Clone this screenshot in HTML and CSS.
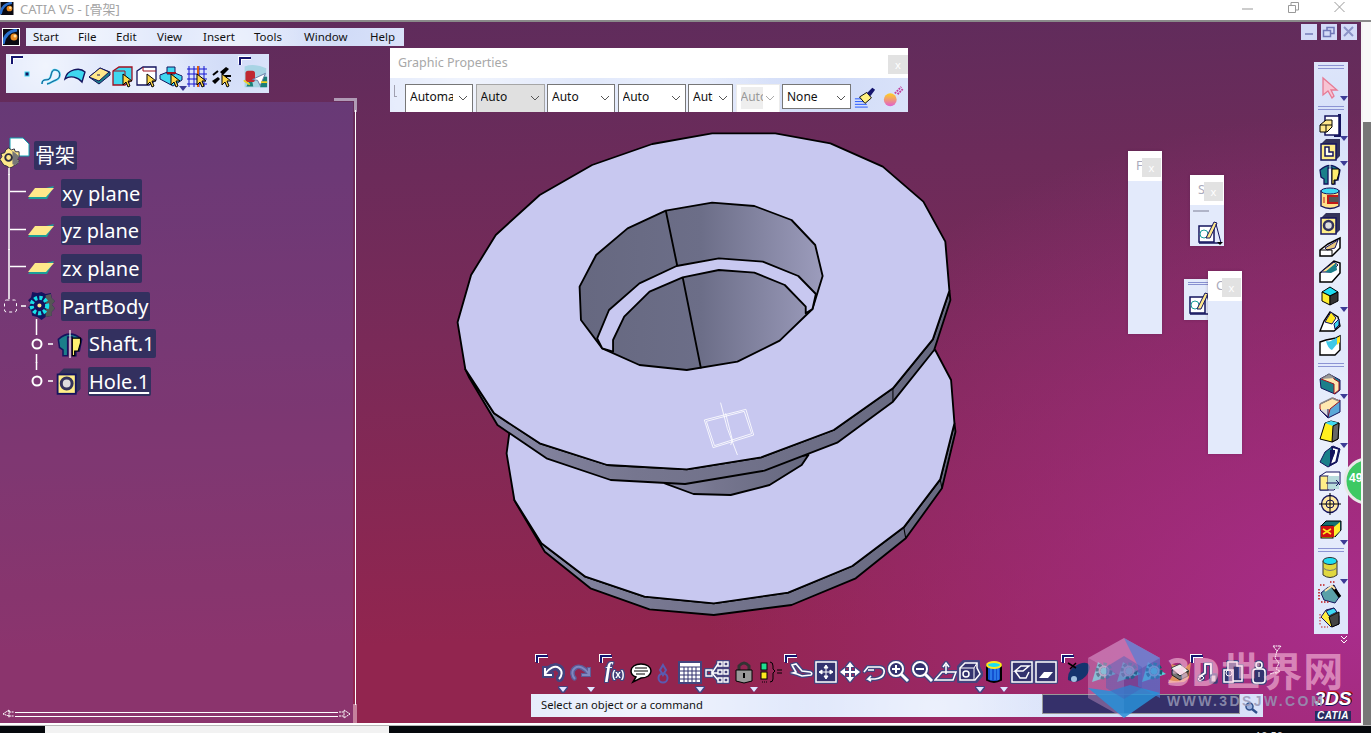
FILE: index.html
```html
<!DOCTYPE html>
<html lang="en">
<head>
<meta charset="utf-8">
<title>CATIA V5 - [骨架]</title>
<link rel="stylesheet" href="styles.css">
</head>
<body>
<svg class="defs" aria-hidden="true">
<defs>
<linearGradient id="wall" x1="0" y1="0" x2="1" y2="0"><stop offset="0" stop-color="#666880"/><stop offset=".5" stop-color="#6c6e88"/><stop offset="1" stop-color="#9c9cbc"/></linearGradient>
<linearGradient id="band" x1="0" y1="0" x2="1" y2="0"><stop offset="0" stop-color="#8a8aa8"/><stop offset=".35" stop-color="#76768f"/><stop offset="1" stop-color="#66687f"/></linearGradient>
<linearGradient id="ball" x1="0" y1="0" x2="0" y2="1"><stop offset="0" stop-color="#ffd020"/><stop offset="1" stop-color="#e060d0"/></linearGradient>
<symbol id="logo" viewBox="0 0 16 16"><rect width="16" height="16" fill="#0a0a12"/><path d="M0 15C1 7 6 2 14 1" stroke="#2a70d0" stroke-width="3" fill="none"/><circle cx="11" cy="8" r="3.5" fill="#e88a20"/><circle cx="12" cy="7" r="1.5" fill="#ffe0a0"/></symbol>
<symbol id="cur" viewBox="0 0 24 24"><path d="M12 10v11l3-3 2 5 2-1-2-5h4z" fill="#ffd84a" stroke="#000"/></symbol>
<symbol id="point" viewBox="0 0 24 24"><rect x="10" y="8" width="4" height="4" fill="#14145e" stroke="#3fd8f0"/></symbol>
<symbol id="spline" viewBox="0 0 24 24"><path d="M3 20c0-7 6-2 8-6s1-9 6-8 5 8 0 10-5 3-9 4" fill="none" stroke="#3fd8f0" stroke-width="2"/><path d="M3 20c0-7 6-2 8-6s1-9 6-8 5 8 0 10-5 3-9 4" fill="none" stroke="#14145e" stroke-width=".7"/></symbol>
<symbol id="surf" viewBox="0 0 24 24"><path d="M2 15C4 5 17 3 22 8l-3 10c-4-5-12-7-17-3z" fill="#3fd8f0" stroke="#14145e" stroke-width="1.4"/></symbol>
<symbol id="dia" viewBox="0 0 24 24"><path d="M2 13 13 4l10 4v3L12 20z" fill="#1b7f8a" stroke="#14145e"/><path d="M2 13 13 4l9 4-10 9z" fill="#ffe88a" stroke="#14145e"/><path d="M10 11h3" stroke="#14145e"/></symbol>
<symbol id="box1" viewBox="0 0 24 24"><path d="M2 7 8 3h13v13l-7 5H2z" fill="#3fd8f0" stroke="#a01020" stroke-width="1.3"/><path d="M2 7h12v14" fill="none" stroke="#a01020"/><use href="#cur"/></symbol>
<symbol id="box2" viewBox="0 0 24 24"><path d="M2 7 8 3h13v13l-7 5H2z" fill="#fff" stroke="#14145e" stroke-width="1.3"/><path d="M8 3v4h13" fill="none" stroke="#a01020"/><use href="#cur"/></symbol>
<symbol id="mbox" viewBox="0 0 24 24"><path d="M1 11 11 7l12 5-9 5z" fill="#3fd8f0" stroke="#14145e"/><path d="M8 3h8v7H8zM1 11v4l13 7 9-6v-4" fill="#3fd8f0" stroke="#14145e"/><path d="M8 9h9" stroke="#a01020" stroke-width="2"/><use href="#cur"/></symbol>
<symbol id="grid" viewBox="0 0 24 24"><path d="M2 5h20M2 10h20M2 15h20M2 20h20M4 2v21M9 2v21M14 2v21M19 2v21" stroke="#1414d0"/><path d="M13 2v21" stroke="#e06010" stroke-width="2"/><use href="#cur"/></symbol>
<symbol id="cross" viewBox="0 0 24 24"><path d="M2 17 8 13l2 2-5 5zM10 8l6-5 3 2-6 6z" fill="#000"/><path d="M13 12h8M3 11 8 7" stroke="#000" stroke-width="2"/><use href="#cur"/></symbol>
<symbol id="photo" viewBox="0 0 30 30"><path d="M3 4Q14 0 28 6v22H3z" fill="#a8d4e4"/><rect x="4" y="9" width="11" height="13" rx="3" fill="#c02830"/><path d="M8 22h4l1 5H5zM22 16h7v12h-8z" fill="#1b7f78"/><path d="M12 19 27 12l-6 14-3-6z" fill="#fff" stroke="#6070a0"/><path d="M2 20l7 5M22 22h7" stroke="#f0d020" stroke-width="2"/></symbol>
<symbol id="brush" viewBox="0 0 24 24"><path d="M1 14h11M1 17h12M1 20h13M1 23h14" stroke="#1a50ff"/><path d="M6 12 14 7l5 6-7 6z" fill="#fff080" stroke="#000"/><path d="M14 8l6-6 3 2-5 7z" fill="#14146e"/></symbol>
<symbol id="fball" viewBox="0 0 24 24"><circle cx="9" cy="15" r="7" fill="url(#ball)"/><path d="M14 8l7-7M17 9l6-6" stroke="#c040a0" stroke-width="2" stroke-dasharray="2 1"/></symbol>
<symbol id="arrow" viewBox="0 0 24 24"><path d="M6 3v17l5-4 4 7 2-2-3-6h6z" fill="#f7c4d4" stroke="#e77a94" stroke-width="1.3"/></symbol>
<symbol id="pocket" viewBox="0 0 24 24"><path d="M7 3h14v19H7z" fill="#fff" stroke="#14145e" stroke-width="1.5"/><path d="M20 2h2v21h-6" stroke="#14145e" stroke-width="2" fill="none"/><path d="M2 12l6-5h6v7l-5 5H2z" fill="#ffe88a" stroke="#000"/><path d="M8 12h6M8 12v7M2 12h6" stroke="#000" fill="none"/></symbol>
<symbol id="pad" viewBox="0 0 24 24"><path d="M3 7l5-5h14v17l-4 4H3z" fill="#33335a"/><rect x="3" y="7" width="15" height="16" fill="#ffee88" stroke="#14145e" stroke-width="1.5"/><path d="M7 10h4v5h4v4H7z" fill="#ffe" stroke="#14145e" stroke-width="1.5"/></symbol>
<symbol id="shaft" viewBox="0 0 24 24"><path d="M2 8Q12-1 22 8l-2 10h-3v4h-3V6h-4v16H6v-5L3 15z" fill="#1b7f8a" stroke="#14145e" stroke-width="1.3"/><path d="M14 7h7v4l-2 7h-3v4h-2z" fill="#ffee70" stroke="#000"/><path d="M12 0v24" stroke="#fff"/></symbol>
<symbol id="groove" viewBox="0 0 24 24"><path d="M3 5h18v15q-9 5-18 0z" fill="#ffe088" stroke="#14145e" stroke-width="1.4"/><ellipse cx="12" cy="5" rx="9" ry="3" fill="#3fd8f0" stroke="#14145e"/><path d="M20 10H10v7h10" fill="#555" stroke="#c01818" stroke-width="2"/><path d="M6 11v6" stroke="#c01818"/></symbol>
<symbol id="hole" viewBox="0 0 24 24"><path d="M3 7l5-5h14v17l-4 4H3z" fill="#33335a"/><rect x="3" y="7" width="15" height="16" fill="#ffee88" stroke="#14145e" stroke-width="1.5"/><circle cx="10.500" cy="14.500" r="4.500" fill="#ddd" stroke="#33335a" stroke-width="2.500"/></symbol>
<symbol id="rib" viewBox="0 0 24 24"><path d="M2 21v-6l8-6 12-6v10l-8 8z" fill="#fff" stroke="#000" stroke-width="1.5"/><path d="M7 13l13-8-3 8-8 2z" fill="#e8c880" stroke="#14145e"/><path d="M2 15h12v6" fill="none" stroke="#000"/></symbol>
<symbol id="slot" viewBox="0 0 24 24"><path d="M2 23v-9l14-12 6 2v10l-8 9z" fill="#fff" stroke="#000" stroke-width="1.5"/><path d="M3 13l13-10 4 3-7 7z" fill="#ffe088" stroke="#14145e"/><path d="M7 13l11-9 1 7-6 3z" fill="#1b7f8a"/></symbol>
<symbol id="cube" viewBox="0 0 24 24"><path d="M4 8l8-5 8 5-8 4z" fill="#1fdcf0" stroke="#000"/><path d="M4 8l8 4v9l-8-4z" fill="#ffef30" stroke="#000"/><path d="M12 12l8-4v9l-8 4z" fill="#333" stroke="#000"/></symbol>
<symbol id="stiff" viewBox="0 0 24 24"><path d="M2 23l4-10 6-9 8 5 2 9-6 5z" fill="#fff" stroke="#000" stroke-width="1.4"/><path d="M7 14 13 4l5 6-4 6z" fill="#ffe820" stroke="#14145e"/><path d="M16 16l5-5v6l-4 4z" fill="#3fd8f0" stroke="#14145e"/></symbol>
<symbol id="loft" viewBox="0 0 24 24"><path d="M2 9l6-2 10-2 4-2v14l-5 5H2z" fill="#fff" stroke="#000" stroke-width="1.4"/><path d="M8 8c4 1 5 0 10-3l3-1-2 7-5 6c-3-1-5-5-6-9z" fill="#3fc8e8"/><path d="M19 5l3-2v6l-3 3z" fill="#ffe820"/></symbol>
<symbol id="fillet" viewBox="0 0 24 24"><path d="M2 8l9-5 11 6v10l-5 4L3 17z" fill="#1b7f8a" stroke="#14145e"/><path d="M3 8c8-5 12-4 13 0l5 3v8l-5 4V13z" fill="#ffe8b0" stroke="#a01020"/><path d="M3 8l8-5 6 4" fill="#999" stroke="#777"/></symbol>
<symbol id="chamfer" viewBox="0 0 24 24"><path d="M2 15l8 8 12-6V5z" fill="#5aa8d8" stroke="#14145e"/><path d="M2 14V9L15 3l7 3-10 8-2 8z" fill="#ffe8b0" stroke="#a01020"/><path d="M2 9l12-6 7 3" stroke="#888" fill="none" stroke-width="1.500"/><path d="M2 15l8 7v-8" stroke="#14145e" fill="#ddd"/></symbol>
<symbol id="draft" viewBox="0 0 24 24"><path d="M7 4l6-2 8 2-1 16-6 3-12-3z" fill="#ffef20" stroke="#000"/><path d="M7 4l6-2 8 2-6 3z" fill="#3fd8f0"/><path d="M15 7l6-3-1 16-6 3z" fill="#666" stroke="#000"/></symbol>
<symbol id="shell" viewBox="0 0 24 24"><path d="M2 18l5-10 8-6 7 3-3 13-9 5z" fill="#1b7f8a" stroke="#14145e"/><path d="M14 3l7 2-3 13-6 3 3-10z" fill="#fff" stroke="#14145e" stroke-width="1.500"/><path d="M12 6h5v3l-3 7-2 3z" fill="#14145e"/></symbol>
<symbol id="thick" viewBox="0 0 24 24"><path d="M2 8l6-4h14v12l-6 6H2z" fill="#fff" stroke="#14145e"/><rect x="2" y="8" width="8" height="14" fill="#ffee88" stroke="#14145e"/><path d="M10 8h11v13H10z" fill="#b8dcdc"/><path d="M8 15h13m-3-3 3 3-3 3" stroke="#14145e" fill="none"/></symbol>
<symbol id="target" viewBox="0 0 24 24"><circle cx="12" cy="12" r="8.500" fill="#ffe8a0" stroke="#14145e" stroke-width="1.300"/><circle cx="12" cy="12" r="4" fill="none" stroke="#14145e"/><path d="M12 1v22M1 12h22" stroke="#000"/></symbol>
<symbol id="rbox" viewBox="0 0 24 24"><path d="M3 9l5-5h15v9l-6 7z" fill="#167070" stroke="#000"/><rect x="3" y="9" width="12" height="12" fill="#ffe820" stroke="#000"/><path d="M3 9h13v11H3z" fill="#d01010"/><path d="M5 12l8 5M13 12l-8 5" stroke="#ffe820" stroke-width="1.500"/><path d="M16 10l6-5v9l-6 6z" fill="#ffef30"/></symbol>
<symbol id="cyl" viewBox="0 0 24 24"><path d="M5 6h14v14q-7 5-14 0z" fill="#e0d840" stroke="#333"/><path d="M5 13q7 5 14 0" fill="none" stroke="#777"/><ellipse cx="12" cy="6" rx="7" ry="3.500" fill="#1fdcf0" stroke="#333"/></symbol>
<symbol id="spark" viewBox="0 0 24 24"><path d="M3 13l6-5 7-3 6 11-5 7-11-3z" fill="#5aa0a8" stroke="#14145e"/><path d="M14 6l8 11" stroke="#000" stroke-width="3"/><path d="M2 5h6M1 9v12M3 22h8M12 2h6" stroke="#c01818" stroke-width="1.600" stroke-dasharray="1.500 1.500"/><path d="M7 11l7-5 3 3" stroke="#ffe8b0" stroke-width="2" fill="none"/></symbol>
<symbol id="spark2" viewBox="0 0 24 24"><path d="M3 12l5-7 8-2 5 8v8l-8 3z" fill="#ffee40" stroke="#14145e"/><path d="M8 6l8-3 3 4-8 4z" fill="#3fd8f0" stroke="#14145e"/><path d="M11 12l10-5v12l-7 3z" fill="#444" stroke="#000"/><path d="M2 9v11M3 22h7" stroke="#c01818" stroke-dasharray="1.500 1.500"/></symbol>
<symbol id="sketch" viewBox="0 0 26 26"><path d="M2 6h15v16H2z" fill="#fff" stroke="#14145e" stroke-width="1.500"/><path d="M2 23h20" stroke="#14145e" stroke-width="1.500"/><circle cx="7" cy="14" r="4" fill="none" stroke="#1b9f9a"/><path d="M9 18 17 2l3 1-7 15z" fill="#ffe88a" stroke="#14145e"/><path d="M19 4l5 19" stroke="#14145e"/><path d="M20 22h6l-3 3z" fill="#000"/></symbol>
<symbol id="undo" viewBox="0 0 24 24"><path d="M4 8v7h7M4 14C8 8 14 5 18 8s3 8 0 11" fill="none" stroke="#fff" stroke-width="2"/></symbol>
<symbol id="redo" viewBox="0 0 24 24"><path d="M20 8v7h-7M20 14C16 8 10 5 6 8s-3 8 0 11" fill="none" stroke="#8088c0" stroke-width="2"/></symbol>
<symbol id="fx" viewBox="0 0 24 24"><text x="0" y="17" class="fxt">f</text><text x="7" y="18" class="fxs">(x)</text></symbol>
<symbol id="talk" viewBox="0 0 24 24"><path d="M12 4c6 0 10 3 10 7s-4 7-10 7l-8 4 3-5c-3-1-5-3-5-6 0-4 4-7 10-7z" fill="#fff" stroke="#000" stroke-width="1.500"/><path d="M6 8h12M5 11h14M7 14h9" stroke="#000"/></symbol>
<symbol id="dim" viewBox="0 0 24 24"><circle cx="12" cy="18" r="4.500" fill="none" stroke="#5a5ab0" stroke-width="2"/><path d="M12 5l3 5-3 5-3-5z" fill="none" stroke="#5a5ab0" stroke-width="2"/></symbol>
<symbol id="table" viewBox="0 0 24 24"><rect x="2" y="3" width="20" height="19" fill="#fff"/><path d="M2 7h20M2 11h20M2 15h20M2 19h20M6 7v15M10 7v15M14 7v15M18 7v15" stroke="#33336e"/></symbol>
<symbol id="tree" viewBox="0 0 24 24"><path d="M1 10h6v6H1zM13 2h4v4h-4zM19 2h4v4h-4zM13 10h4v4h-4zM19 10h4v4h-4zM13 18h4v4h-4zM19 18h4v4h-4z" fill="none" stroke="#fff" stroke-width="1.400"/><path d="M7 13l6-9M7 13h6M7 13l6 7" stroke="#fff" stroke-width="1.400"/></symbol>
<symbol id="lock" viewBox="0 0 24 24"><path d="M7 10V6q5-6 10 0v4" fill="none" stroke="#333" stroke-width="3"/><path d="M4 10h16v11l-8 2-8-2z" fill="#999" stroke="#000"/><path d="M12 13v5" stroke="#000" stroke-width="2"/></symbol>
<symbol id="eq" viewBox="0 0 24 24"><rect x="2" y="3" width="6" height="7" fill="#1fdc90" stroke="#000"/><rect x="2" y="12" width="6" height="7" fill="#ffe820" stroke="#000"/><path d="M3 22h1m1 0h1m1 0h1" stroke="#000"/><path d="M11 2q3 0 3 4v3l2 2-2 2v6q0 3-3 3" fill="none" stroke="#000"/><path d="M18 10h5M18 13h5" stroke="#000"/></symbol>
<symbol id="plane" viewBox="0 0 24 24"><path d="M2 5l4-1 6 7 8 1q3 1 1 3l-9 1-5-2-4-1 3-1-3-5z" fill="none" stroke="#fff" stroke-width="1.600"/></symbol>
<symbol id="fit" viewBox="0 0 24 24"><rect x="2" y="2" width="20" height="20" fill="#33336e" stroke="#fff" stroke-width="1.500"/><path d="M12 6v12M6 12h12M12 5l-2 3h4zM12 19l-2-3h4zM5 12l3-2v4zM19 12l-3-2v4z" fill="#fff" stroke="#fff"/></symbol>
<symbol id="pan" viewBox="0 0 24 24"><path d="M12 2l-4 5h3v4H7V8l-5 4 5 4v-3h4v4H8l4 5 4-5h-3v-4h4v3l5-4-5-4v3h-4V7h3z" fill="#fff"/></symbol>
<symbol id="rot" viewBox="0 0 24 24"><path d="M2 12l4-5h12q5 1 4 6t-9 6H6l3-3m-3 3 3 2M6 10h6" fill="none" stroke="#fff" stroke-width="1.600"/></symbol>
<symbol id="zin" viewBox="0 0 24 24"><circle cx="10" cy="9" r="7" fill="#33336e" stroke="#fff" stroke-width="2"/><path d="M6 9h8M10 5v8" stroke="#fff" stroke-width="2"/><path d="M15 14l7 7" stroke="#fff" stroke-width="3"/></symbol>
<symbol id="zout" viewBox="0 0 24 24"><circle cx="10" cy="9" r="7" fill="#33336e" stroke="#fff" stroke-width="2"/><path d="M6 9h8" stroke="#fff" stroke-width="2"/><path d="M15 14l7 7" stroke="#fff" stroke-width="3"/></symbol>
<symbol id="norm" viewBox="0 0 24 24"><path d="M1 20 8 12h14l-3 8zM12 14V5M9 7l3-4 3 4" fill="none" stroke="#fff" stroke-width="1.500"/></symbol>
<symbol id="view" viewBox="0 0 24 24"><path d="M2 8l5-5h12v5l3 6-5 6H2z" fill="#33336e" stroke="#fff" stroke-width="1.500"/><path d="M2 8h14v12M16 8l3-5" fill="none" stroke="#fff"/><circle cx="8" cy="14" r="3" fill="none" stroke="#fff" stroke-width="1.500"/></symbol>
<symbol id="can" viewBox="0 0 24 24"><path d="M5 5h14v15q-7 4-14 0z" fill="#1450d0" stroke="#000" stroke-width="2"/><path d="M9 8v12M13 8v12M16 8v12" stroke="#40a0ff"/><ellipse cx="12" cy="5" rx="7" ry="3" fill="#1fdcf0" stroke="#ffe820" stroke-width="2"/></symbol>
<symbol id="sq1" viewBox="0 0 24 24"><rect x="2" y="2" width="20" height="20" fill="#33336e" stroke="#fff" stroke-width="1.500"/><path d="M5 11l6-5h8l-6 5zM5 11l5 7h6l3-6" fill="none" stroke="#fff" stroke-width="1.500"/></symbol>
<symbol id="sq2" viewBox="0 0 24 24"><rect x="2" y="2" width="20" height="20" fill="#33336e" stroke="#fff" stroke-width="1.500"/><path d="M5 18l5-6h9l-5 6z" fill="#fff"/></symbol>
<symbol id="blue" viewBox="0 0 24 24"><path d="M1 20Q0 9 12 4q8-3 10 1t-3 11Q10 25 1 20z" fill="#14346e"/><circle cx="7" cy="19" r="3" fill="#a0c0e0"/><path d="M1 3l8 5M9 3l-6 6" stroke="#000" stroke-width="1.500"/></symbol>
<symbol id="gear" viewBox="0 0 24 24"><path d="M0 22 24 14 6 2z" fill="#58d0d8"/><circle cx="12" cy="11" r="6" fill="none" stroke="#10606e" stroke-width="5" stroke-dasharray="3 1.500"/><circle cx="12" cy="11" r="4.500" fill="none" stroke="#a8a8c0" stroke-width="2"/></symbol>
<symbol id="photo2" viewBox="0 0 24 24"><path d="M1 23l6-10L4 4l14 4 6-6-2 16-5 4z" fill="#e09060"/><path d="M4 8l9-4 9 7-9 5z" fill="#eee" stroke="#444"/><path d="M5 10l8 6 8-5v5l-8 4-8-5z" fill="#777" stroke="#222"/></symbol>
<symbol id="music" viewBox="0 0 24 24"><path d="M3 17l6-4V4h6v14" fill="none" stroke="#fff" stroke-width="1.800" stroke-linejoin="round"/><path d="M2 19l4-3 2 2-4 3z" fill="#33336e" stroke="#fff"/><rect x="15" y="15" width="5" height="7" fill="#ddd" stroke="#33336e"/></symbol>
<symbol id="page" viewBox="0 0 24 24"><path d="M6 2h9v4h5v15H6z" fill="#33336e" stroke="#fff" stroke-width="1.500"/><path d="M2 10h9v12H2z" fill="#33336e" stroke="#fff" stroke-width="1.500"/><circle cx="7" cy="13" r="3" fill="none" stroke="#fff"/></symbol>
<symbol id="jar" viewBox="0 0 24 24"><rect x="6" y="9" width="12" height="14" rx="3" fill="#33336e" stroke="#fff" stroke-width="1.500"/><circle cx="12" cy="5" r="3" fill="#33336e" stroke="#fff" stroke-width="1.500"/><path d="M12 12v5" stroke="#fff"/></symbol>
<symbol id="tplane" viewBox="0 0 28 16"><path d="M1 14 7 6 27 1l-7 13z" fill="#1b9f9a"/><path d="M1 12 8 3h19l-8 9z" fill="#ffe88a"/></symbol>
<symbol id="tbody" viewBox="0 0 28 28"><path d="M14 1l4 2 5-1 1 5 3 3-3 3 3 4-3 3v4l-6 1-4 3-4-3-5-1-1-5-3-3 3-4-3-3 3-3 1-5 5 1z" fill="#14145e"/><path d="M18 4l5-1 1 4 3 3-3 3 3 4-3 3v4l-6 1z" fill="#555"/><circle cx="12" cy="14" r="7.500" fill="none" stroke="#18e0e8" stroke-width="4" stroke-dasharray="3 2"/><circle cx="12" cy="14" r="3" fill="#ffe88a" stroke="#14145e" stroke-width="2"/></symbol>
<symbol id="troot" viewBox="0 0 22 22"><path d="M9 1l3 2 3-1 1 3h4v5l-3 2 3 2-2 4-3 1-2 2-3 1-3-2-3-1-2-3-2-3 2-3-1-3 4-1 1-3z" fill="#ffe88a" stroke="#2a2a40"/><path d="M13 4l4 3 3 3-2 3 2 3-4 3-3-1z" fill="#777"/><circle cx="9" cy="11" r="3.500" fill="none" stroke="#2a2a40" stroke-width="2"/></symbol>
</defs>
</svg>

<header class="titlebar">
  <svg class="tb-logo"><use href="#logo"/></svg>
  <span class="tb-title">CATIA V5 - [骨架]</span>
  <div class="tb-ctrls">
    <svg class="tb-c"><path d="M0 7h11" stroke="#999"/></svg>
    <svg class="tb-c"><path d="M.5 3.500h7v7h-7zM3 3V.5h7.500V8H8" fill="none" stroke="#999"/></svg>
    <svg class="tb-c"><path d="M.5 0l10 10M10.500 0l-10 10" stroke="#999"/></svg>
  </div>
</header>

<div class="work">
<main class="canvas">

  <svg class="logo-btn"><use href="#logo"/></svg>
  <nav class="menu mottle">
    <span class="m1">Start</span><span class="m2">File</span><span class="m3">Edit</span><span class="m4">View</span><span class="m5">Insert</span><span class="m6">Tools</span><span class="m7">Window</span><span class="m8">Help</span>
  </nav>

  <div class="toolbar1 mottle">
    <i class="bracket"></i>
    <svg class="i"><use href="#point"/></svg>
    <svg class="i"><use href="#spline"/></svg>
    <svg class="i"><use href="#surf"/></svg>
    <svg class="i"><use href="#dia"/></svg>
    <svg class="i"><use href="#box1"/></svg>
    <svg class="i"><use href="#box2"/></svg>
    <span class="t dr-bot"><svg class="i"><use href="#mbox"/></svg></span>
    <svg class="i tm2"><use href="#grid"/></svg>
    <svg class="i tm1"><use href="#cross"/></svg>
    <span class="photo-wrap"><i class="bracket br-in"></i><svg class="photo"><use href="#photo"/></svg></span>
  </div>

  <aside class="panel">
    <i class="corner"></i>
    <i class="tab"></i>
    <ul class="tree">
      <li class="row"><svg class="c c0" viewBox="0 0 34 38"><path d="M9 30v8" stroke="#fff" stroke-width="1.500"/><path d="M10 1h13l6 6v12H10z" fill="#fff" stroke="#10a0b0"/><use href="#troot" x="0" y="10" width="21" height="21"/></svg><span class="lb">骨架</span></li>
      <li class="row"><svg class="c c1" viewBox="0 0 61 38"><path d="M9 0v38M10 17.500h16" stroke="#fff" stroke-width="1.500"/><use href="#tplane" x="27" y="11" width="28" height="16"/></svg><span class="lb">xy plane</span></li>
      <li class="row"><svg class="c c1" viewBox="0 0 61 38"><path d="M9 0v38M10 17.500h16" stroke="#fff" stroke-width="1.500"/><use href="#tplane" x="27" y="11" width="28" height="16"/></svg><span class="lb">yz plane</span></li>
      <li class="row"><svg class="c c1" viewBox="0 0 61 38"><path d="M9 0v38M10 17.500h16" stroke="#fff" stroke-width="1.500"/><use href="#tplane" x="27" y="11" width="28" height="16"/></svg><span class="lb">zx plane</span></li>
      <li class="row"><svg class="c c1" viewBox="0 0 61 38"><path d="M9 0v12M21 19h5M36.500 32v6" stroke="#fff" stroke-width="1.500"/><rect x="4.500" y="13" width="12" height="12" rx="2" fill="none" stroke="#fff" stroke-dasharray="3 3"/><use href="#tbody" x="27" y="4" width="29" height="29"/></svg><span class="lb">PartBody</span></li>
      <li class="row"><svg class="c c2" viewBox="0 0 88 38"><path d="M36.500 0v10M36.500 29v9M48 19h5" stroke="#fff" stroke-width="1.500"/><circle cx="37" cy="19" r="4.500" fill="none" stroke="#fff" stroke-width="2"/><use href="#shaft" x="56" y="5" width="28" height="28"/></svg><span class="lb">Shaft.1</span></li>
      <li class="row"><svg class="c c2" viewBox="0 0 88 38"><path d="M36.500 0v8M48 19h5" stroke="#fff" stroke-width="1.500"/><circle cx="37" cy="19" r="4.500" fill="none" stroke="#fff" stroke-width="2"/><use href="#hole" x="54" y="4" width="29" height="29"/></svg><span class="lb lb-u">Hole.1</span></li>
    </ul>
    <div class="hscroll">
      <svg class="arr"><path d="M1 5 7 1v2M7 7 1 5M7 1v8M7 3h5M7 7h5" fill="none" stroke="#fff" stroke-dasharray="2 .6"/></svg>
      <i class="track"></i>
      <svg class="arr"><path d="M12 5 6 1v8zM1 3h5M1 7h5" fill="none" stroke="#fff" stroke-dasharray="2 .6"/></svg>
    </div>
  </aside>

  <svg class="model" viewBox="0 0 1568 1500" preserveAspectRatio="none">
    <g stroke="#000" stroke-width="5.500" stroke-linejoin="round">
      <path d="M225 1150 310 1295 445 1405 620 1468 810 1485 1040 1455 1230 1375 1378 1255 1485 1105 1525 935 1522 910 1480 1078 1372 1222 1220 1338 1030 1418 810 1450 605 1430 430 1370 300 1270 220 1140z" fill="url(#band)"/>
      <path d="M205 940 197 1000 220 1140 300 1270 430 1370 605 1430 810 1450 1030 1418 1220 1338 1372 1222 1480 1078 1522 910 1512 780 1465 690 1200 800 600 900z" fill="#c8c8f0"/>
      <path d="M1372 1222 1378 1255M1480 1078 1485 1105" fill="none" stroke-width="3"/>
      <path d="M665 1090 750 1122 860 1125 975 1095 1070 1035 1090 1005 800 1040z" fill="url(#band)"/>
      <path d="M75 748 85 770 170 915 315 1015 505 1080 725 1092 960 1052 1175 968 1340 845 1462 690 1510 540 1507 512 1458 658 1340 805 1165 930 950 1012 730 1048 495 1035 295 970 160 880z" fill="url(#band)"/>
      <path d="M52 607 92 465 165 345 295 225 450 135 628 72 805 40 992 40 1155 70 1310 140 1430 245 1495 365 1507 512 1458 658 1340 805 1165 930 950 1012 730 1048 495 1035 295 970 160 880 75 748z" fill="#c8c8f0"/>
      <path d="M1340 805 1340 845" fill="none" stroke-width="3"/>
      <path d="M413 500 462 405 555 325 668 272 805 248 930 258 1040 300 1110 375 1132 468 1102 567 1005 662 880 725 730 750 590 735 480 685 417 600z" fill="url(#wall)"/>
      <path d="M465 655 500 570 590 490 700 438 825 415 955 425 1060 468 1112 522 1102 567 1082 580 1082 560 1020 495 930 458 825 450 718 472 620 515 545 590 512 660 512 695 480 685z" fill="#c8c8f0"/>
      <path d="M668 272 702 438M718 472 772 745" fill="none"/>
    </g>
    <path d="M782 900 905 868 928 945 808 983zM788 904 900 874 922 941 812 977zM830 848 850 925 880 1005M845 880 865 960 860 975" fill="none" stroke="#fff" stroke-width="2.500"/>
  </svg>

  <section class="gp">
    <div class="gp-head"><span class="gp-title">Graphic Properties</span><span class="xbtn gp-x">x</span></div>
    <div class="gp-tools mottle">
      <i class="grip"></i>
      <div class="sel w68 clip"><span>Automatic</span><svg class="chev"><path d="M1 1l4 4 4-4" fill="none" stroke="#555"/></svg></div>
      <div class="sel w69 sel-g"><span>Auto</span><svg class="chev"><path d="M1 1l4 4 4-4" fill="none" stroke="#555"/></svg></div>
      <div class="sel w68"><span>Auto</span><svg class="chev"><path d="M1 1l4 4 4-4" fill="none" stroke="#555"/></svg></div>
      <div class="sel w68"><span>Auto</span><svg class="chev"><path d="M1 1l4 4 4-4" fill="none" stroke="#555"/></svg></div>
      <div class="sel w45 clip"><span>Auto</span><svg class="chev"><path d="M1 1l4 4 4-4" fill="none" stroke="#555"/></svg></div>
      <div class="sel w44 clip sel-d"><span>Auto</span><svg class="chev"><path d="M1 1l4 4 4-4" fill="none" stroke="#aaa"/></svg></div>
      <div class="sel w69 sel-n"><span>None</span><svg class="chev"><path d="M1 1l4 4 4-4" fill="none" stroke="#555"/></svg></div>
      <svg class="i gp-i"><use href="#brush"/></svg>
      <svg class="i gp-i"><use href="#fball"/></svg>
    </div>
  </section>

  <section class="ft ft-f"><div class="ft-head"><span class="ft-l">F</span><span class="xbtn">x</span></div></section>
  <section class="ft ft-s"><div class="ft-head"><span class="ft-l">S</span><span class="xbtn">x</span></div><i class="ft-line"></i><svg class="sk"><use href="#sketch"/></svg></section>
  <section class="ft ft-b mottle"><i class="ft-line2"></i><svg class="sk"><use href="#sketch"/></svg></section>
  <section class="ft ft-c"><div class="ft-head"><span class="ft-l">C</span><span class="xbtn">x</span></div></section>

  <div class="winbtns">
    <span class="wb"><svg class="wbi"><path d="M3 9h8" stroke="#8c94c8" stroke-width="2"/></svg></span>
    <span class="wb"><svg class="wbi"><path d="M1.500 5.500h7v6h-7zM5 5V2.500h7v6H9" fill="none" stroke="#7078b8" stroke-width="1.500"/></svg></span>
    <span class="wb"><svg class="wbi"><path d="M2 2l9 9M11 2l-9 9" stroke="#8c94c8" stroke-width="2"/></svg></span>
  </div>

  <div class="rbar mottle">
    <i class="sep"></i>
    <span class="t r-cur dr"><svg class="i"><use href="#arrow"/></svg></span>
    <i class="sep"></i>
    <div class="r-group">
      <svg class="i"><use href="#pocket"/></svg>
      <span class="t dr"><svg class="i"><use href="#pad"/></svg></span>
      <span class="t dr dr-up"><svg class="i"><use href="#shaft"/></svg></span>
      <svg class="i"><use href="#groove"/></svg>
      <svg class="i"><use href="#hole"/></svg>
      <svg class="i"><use href="#rib"/></svg>
      <svg class="i"><use href="#slot"/></svg>
      <svg class="i"><use href="#cube"/></svg>
      <span class="t dr dr-up"><svg class="i"><use href="#stiff"/></svg></span>
      <svg class="i"><use href="#loft"/></svg>
    </div>
    <i class="sep sep2"></i>
    <div class="r-group">
      <svg class="i"><use href="#fillet"/></svg>
      <span class="t dr dr-up"><svg class="i"><use href="#chamfer"/></svg></span>
      <svg class="i"><use href="#draft"/></svg>
      <span class="t dr dr-up"><svg class="i"><use href="#shell"/></svg></span>
      <svg class="i"><use href="#thick"/></svg>
      <svg class="i"><use href="#target"/></svg>
      <span class="t dr dr-low"><svg class="i"><use href="#rbox"/></svg></span>
    </div>
    <i class="sep sep3"></i>
    <div class="r-group r3">
      <svg class="i"><use href="#cyl"/></svg>
      <span class="t dr dr-up"><svg class="i"><use href="#spark"/></svg></span>
      <svg class="i"><use href="#spark2"/></svg>
    </div>
  </div>
  <svg class="more"><path d="M1 1l3 3 3-3M1 5l3 3 3-3" fill="none" stroke="#fff"/></svg>
  <svg class="badge-svg" aria-hidden="true"><circle cx="23" cy="23" r="22" fill="#3dc963" stroke="#e8e8e8" stroke-width="3"/></svg>
  <span class="badge-t">49</span>

  <div class="bt g1"><i class="bracket"></i>
    <span class="t dr-bot h"><svg class="i"><use href="#undo"/></svg></span>
    <span class="t dr-bot h2"><svg class="i"><use href="#redo"/></svg></span>
  </div>
  <div class="bt g2"><i class="bracket"></i>
    <svg class="i h"><use href="#fx"/></svg>
    <svg class="i"><use href="#talk"/></svg>
    <svg class="i"><use href="#dim"/></svg>
  </div>
  <div class="bt g3">
    <span class="t dr-bot h"><svg class="i"><use href="#table"/></svg></span>
    <svg class="i h"><use href="#tree"/></svg>
    <span class="t dr-bot"><svg class="i"><use href="#lock"/></svg></span>
    <svg class="i"><use href="#eq"/></svg>
  </div>
  <div class="bt g4"><i class="bracket"></i>
    <svg class="i h"><use href="#plane"/></svg>
    <svg class="i h"><use href="#fit"/></svg>
    <svg class="i h"><use href="#pan"/></svg>
    <svg class="i h"><use href="#rot"/></svg>
    <svg class="i h"><use href="#zin"/></svg>
    <svg class="i h"><use href="#zout"/></svg>
    <svg class="i h"><use href="#norm"/></svg>
    <span class="t dr-bot h"><svg class="i"><use href="#view"/></svg></span>
    <span class="t dr-bot"><svg class="i"><use href="#can"/></svg></span>
    <svg class="i h gap4"><use href="#sq1"/></svg>
    <svg class="i h"><use href="#sq2"/></svg>
  </div>
  <div class="bt g5"><i class="bracket"></i>
    <svg class="i"><use href="#blue"/></svg>
    <svg class="i"><use href="#gear"/></svg>
    <svg class="i"><use href="#gear"/></svg>
    <svg class="i"><use href="#gear"/></svg>
    <svg class="i"><use href="#photo2"/></svg>
  </div>
  <div class="bt g6"><i class="bracket"></i>
    <svg class="i h"><use href="#music"/></svg>
    <svg class="i h"><use href="#page"/></svg>
    <svg class="i h"><use href="#jar"/></svg>
  </div>
  <svg class="compass"><path d="M3 1h8L7 6zM7 6 5 13l4 5-3 6 4 2-5 3M0 29l7-2" fill="none" stroke="#fff" stroke-dasharray="2 .5"/></svg>

  <div class="status mottle">
    <span class="status-t">Select an object or a command</span>
    <div class="status-in"></div>
    <svg class="status-i"><circle cx="4.500" cy="4.500" r="3.500" fill="#9ab0dc" stroke="#30508c" stroke-width="1.500"/><path d="M7 7l5 4" stroke="#30508c" stroke-width="2.500"/></svg>
  </div>

  <div class="catia"><span class="ds">3DS</span><span class="cat">CATIA</span></div>

  <div class="wm">
    <svg class="wm-logo" viewBox="0 0 72 80">
      <path d="M36 0 72 20 36 40 0 20z" fill="#e2a8d8" opacity=".55"/>
      <path d="M36 0 72 20v40L50 48V28z" fill="#4a80d8" opacity=".65"/>
      <path d="M0 20 36 40v40L0 60z" fill="#d8a0d0" opacity=".4"/>
      <path d="M0 50 36 80l36-25-30-8-20 6z" fill="#2890d8" opacity=".85"/>
      <path d="M36 18 54 29v21L36 61 18 50V29z" fill="#4a60b8" opacity=".45"/>
    </svg>
    <div class="wm-text"><span class="wm-big">3D世界网</span><span class="wm-url">WWW.3DSJW.COM</span></div>
  </div>
</main>
<aside class="strip"></aside>
</div>

<footer class="taskbar">
  <i class="task-white"></i>
  <span class="clock">10:50</span>
</footer>
</body>
</html>
```

FILE: styles.css
```css
* { box-sizing: border-box; }
html, body { margin: 0; padding: 0; }
body {
  width: 1371px; height: 733px; overflow: hidden;
  display: flex; flex-direction: column;
  font-family: "Noto Sans", "Noto Sans CJK SC", sans-serif;
  background: #fff;
}
i { display: block; font-style: normal; }
.defs { position: absolute; width: 0; height: 0; }
.mottle {
  background-color: #dfe7fb;
  background-image:
    radial-gradient(circle at 15% 30%, rgba(255,255,255,.55), transparent 30%),
    radial-gradient(circle at 55% 70%, rgba(255,255,255,.4), transparent 35%),
    radial-gradient(circle at 85% 20%, rgba(200,212,245,.6), transparent 30%);
}

/* title bar */
.titlebar {
  height: 22px; flex: none; display: flex; align-items: flex-start;
  border-bottom: 2px solid #8a8a8a; background: #fff; padding-top: 2px;
}
.tb-logo { width: 14px; height: 13px; }
.tb-title { margin-left: 6px; font-size: 13px; line-height: 14px; color: #a4a4a4; }
.tb-ctrls { margin-left: auto; width: 124px; display: flex; gap: 35px; margin-right: 5px; }
.tb-c { width: 11px; height: 11px; flex: none; }

.work { display: flex; height: 703px; flex: none; }
.canvas {
  position: relative; width: 1363px; height: 703px; overflow: hidden;
  border-right: 2px solid #f4f4f4; border-bottom: 2px solid #fff;
  background:
    radial-gradient(ellipse 48% 72% at 100% 85%, #a92d8c 0, rgba(169,45,140,0) 100%),
    linear-gradient(178deg, #5e2c5c 0, #7a2a58 45%, #92254f 85%, #92254f 100%);
}
.strip { width: 8px; background: linear-gradient(#f8f8f8 0, #f8f8f8 100px, #777 100px); }

/* menu */
.logo-btn { position: absolute; left: 3px; top: 7px; width: 16px; height: 16px; outline: 1px solid #fff; }
.menu { position: absolute; left: 26px; top: 6px; width: 378px; height: 18px; font-size: 11.5px; line-height: 18px; color: #111; }
.menu span { position: absolute; top: 0; }
.m1 { left: 7px; } .m2 { left: 52px; } .m3 { left: 90px; } .m4 { left: 131px; }
.m5 { left: 177px; } .m6 { left: 228px; } .m7 { left: 278px; } .m8 { left: 344px; }

/* generic */
.i { width: 24px; height: 24px; display: block; flex: none; }
.t { position: relative; display: block; width: 24px; height: 24px; flex: none; }
.bracket { position: absolute; left: -4px; top: -4px; width: 12px; height: 8px; border-left: 2px solid #14146e; border-top: 2px solid #14146e; box-shadow: inset 1px 1px 0 #fff, -1px -1px 0 #fff; }
.dr::after { content: ""; position: absolute; right: -3px; top: -4px; border: 4px solid transparent; border-top: 5px solid #3c3c96; border-bottom: 0; }
.r-cur.dr::after { top: 21px; right: -5px; }
.r-group .dr::after { top: -1px; right: -6px; }
.r-group .dr-low::after { top: 23px; right: -6px; }
.dr-bot::after { content: ""; position: absolute; left: 18px; bottom: -8px; border: 4px solid transparent; border-top: 5px solid #e4e6ff; border-bottom: 0; filter: drop-shadow(0 0 .6px #22228a); }
.h, .h > .i { filter: drop-shadow(1px 0 0 #44447e) drop-shadow(-1px 0 0 #44447e) drop-shadow(0 1px 0 #44447e) drop-shadow(0 -1px 0 #44447e); }
.h2 > .i { filter: drop-shadow(1px 0 0 #5c5c98) drop-shadow(-1px 0 0 #5c5c98) drop-shadow(0 1px 0 #5c5c98) drop-shadow(0 -1px 0 #5c5c98); }
.fxt { font: italic bold 20px "Liberation Serif", serif; fill: #fff; }
.fxs { font: bold 10px "Liberation Sans", sans-serif; fill: #fff; }

/* top toolbar */
.toolbar1 { position: absolute; left: 6px; top: 32px; width: 263px; height: 39px; display: flex; align-items: flex-start; padding: 10px 0 0 9px; overflow: visible; }
.toolbar1 > .bracket { left: 5px; top: 2px; }
.toolbar1 .dr-bot::after { left: 20px; bottom: -3px; border-top-color: #3c3c96; filter: none; }
.tm2 { margin-left: 2px; }
.tm1 { margin-left: 1px; }
.photo-wrap { position: relative; margin-left: 10px; width: 24px; height: 30px; overflow: visible; }
.photo { width: 26px; height: 28px; display: block; margin: -2px 0 0 -2px; }
.br-in { left: -5px; top: -7px; }

/* left panel */
.panel {
  position: absolute; left: 0; top: 80px; width: 353px; height: 621px;
  background: rgba(116,114,232,.2);
  padding-top: 39px;
}
.corner { position: absolute; left: 334px; top: -4px; width: 23px; height: 14px; border-top: 3px solid #b09ab5; border-right: 3px solid #b09ab5; }
.panel::after { content: ""; position: absolute; left: 355px; top: 8px; bottom: 18px; width: 1px; background: #fff; }
.tab { position: absolute; left: 353px; bottom: 0; width: 4px; height: 19px; background: #c5809c; }
.tree { list-style: none; margin: 0; padding: 0; }
.row { display: flex; align-items: center; height: 29px; margin-bottom: 8.67px; }
.c { height: 38px; flex: none; overflow: visible; }
.c0 { width: 34px; } .c1 { width: 61px; } .c2 { width: 88px; }
.lb { background: #33305f; color: #fff; font-size: 20px; line-height: 29px; height: 29px; padding: 0 2px 0 1px; border-radius: 2px; white-space: nowrap; }
.lb-u { text-decoration: underline; text-underline-offset: 3px; }
.hscroll { position: absolute; left: 2px; top: 607px; width: 349px; display: flex; align-items: center; justify-content: space-between; height: 10px; }
.arr { width: 13px; height: 10px; flex: none; }
.track { flex: 1; height: 5px; border-top: 1px solid #fff; border-bottom: 1px solid #fff; }

/* model */
.model { position: absolute; left: 440px; top: 98px; width: 530px; height: 500px; }

/* graphic properties */
.gp { position: absolute; left: 390px; top: 26px; width: 518px; height: 64px; background: #fff; }
.gp-head { position: relative; height: 30px; }
.gp-title { position: absolute; left: 8px; top: 6px; font-size: 12.500px; line-height: 17px; color: #a8a8a8; }
.xbtn { position: absolute; width: 19px; height: 19px; right: 1px; top: 7px; background: #e2e2e2; color: #fff; font-size: 11px; line-height: 19px; text-align: center; }
.gp-x { right: 0; width: 20px; }
.gp-tools { height: 34px; display: flex; gap: 2.500px; padding: 6px 0 0 15px; position: relative; overflow: hidden; }
.grip { position: absolute; left: 4px; top: 7px; width: 3px; height: 12px; border-left: 1px solid #a0a0b0; border-bottom: 1px solid #a0a0b0; }
.sel { height: 30px; flex: none; background: #fff; border: 1px solid #777; display: flex; justify-content: space-between; padding: 2px 4px 0 4px; font-size: 12px; line-height: 20px; color: #111; position: relative; }
.sel span { overflow: hidden; white-space: nowrap; }
.w68 { width: 68px; } .w69 { width: 69px; } .w45 { width: 45px; } .w44 { width: 44px; }
.clip span { width: 43px; }
.w45 span { width: 20px; } .w44 span { width: 22px; }
.sel-g { background: #e0e0e0; border-color: #a6a6a6; }
.sel-d { border-color: #ececec; color: #999; }
.sel-d span { background: #eee; height: 22px; }
.sel-n { height: 25px; }
.chev { width: 10px; height: 6px; margin-top: 8px; flex: none; }
.gp-i { margin: 2px 0 0 0; width: 22px; height: 22px; }
.gp-i + .gp-i { margin-left: 4px; }

/* floating toolbars */
.ft { position: absolute; width: 34px; background: #e3eafb; box-shadow: 0 0 3px rgba(60,20,60,.3); }
.ft-head { position: relative; height: 30px; background: #fff; }
.ft-l { position: absolute; left: 8px; top: 6px; font-size: 12.500px; line-height: 17px; color: #aab; }
.ft-f { left: 1128px; top: 129px; height: 183px; }
.ft-s { left: 1190px; top: 153px; height: 71px; }
.ft-b { left: 1184px; top: 257px; height: 41px; }
.ft-c { left: 1208px; top: 249px; height: 183px; }
.ft-line { display: block; width: 16px; margin: 5px 0 0 3px; border-top: 2px solid #b0b4c8; }
.ft-line2 { width: 20px; margin: 3px 0 0 4px; height: 3px; border-top: 1px solid #8890d0; border-bottom: 1px solid #8890d0; }
.sk { display: block; width: 26px; height: 26px; margin: 8px 0 0 7px; }
.ft-b .sk { margin: 6px 0 0 4px; }

.winbtns { position: absolute; left: 1301px; top: 2px; display: flex; gap: 4px; }
.wb { width: 16px; height: 16px; background: #d3dbf7; display: block; }
.wbi { width: 14px; height: 14px; display: block; margin: 1px; }

/* right bar */
.rbar { position: absolute; left: 1314px; top: 40px; width: 34px; height: 572px; display: flex; flex-direction: column; align-items: center; padding-top: 3px; }
.sep { flex: none; width: 26px; height: 4px; border-top: 1px solid #8c94d4; border-bottom: 1px solid #8c94d4; }
.r-cur { margin: 6px 0 5px -2px; height: 26px; width: 26px; }
.r-group { display: flex; flex-direction: column; gap: .4px; margin: 3px 0 0 -3px; }
.sep2 { margin-top: 6px; }
.sep3 { margin-top: 7px; }
.sep2 + .r-group { margin-top: 4px; }
.r3 { gap: 1.200px; margin-top: 3px; }
.more { position: absolute; left: 1340px; top: 613px; width: 8px; height: 9px; }
.badge-svg { position: absolute; left: 1344px; top: 436px; width: 46px; height: 46px; }
.badge-t { position: absolute; left: 1349px; top: 449px; font: bold 12px "Liberation Sans", sans-serif; color: #fff; }

/* bottom toolbars */
.bt { position: absolute; top: 638px; display: flex; height: 24px; }
.bt > .bracket { left: -5px; top: -5px; }
.g1 { left: 541px; gap: 4px; }
.g2 { left: 605px; gap: 0; }
.g2 .i:last-child { margin-left: -2px; }
.g3 { left: 678px; gap: 3px; }
.g4 { left: 790px; }
.gap4 { margin-left: 4px; }
.g5 { left: 1067px; gap: 1px; }
.g6 { left: 1196px; gap: 1.500px; }
.compass { position: absolute; left: 1270px; top: 623px; width: 14px; height: 30px; overflow: visible; }

/* status */
.status { position: absolute; left: 531px; top: 672px; width: 732px; height: 23px; }
.status-t { position: absolute; left: 10px; top: 2px; font-size: 11.200px; line-height: 17px; color: #111; }
.status-in { position: absolute; left: 511px; top: 0; width: 198px; height: 20px; background: #35306a; border: 1px solid #999; }
.status-i { position: absolute; left: 714px; top: 8px; width: 14px; height: 12px; }

.catia { position: absolute; left: 1312px; top: 665px; width: 42px; height: 34px; display: flex; flex-direction: column; align-items: center; }
.ds { font: italic bold 19px/24px "Liberation Sans", sans-serif; color: #fff; text-shadow: 1px 0 0 #14145e, 0 1px 0 #14145e, 2px -1px 0 #c01818; }
.cat { padding: 0 2px; background: #2a2a60; font: italic bold 10px/10px "Liberation Sans", sans-serif; color: #fff; letter-spacing: .4px; }

/* watermark */
.wm { position: absolute; left: 1088px; top: 616px; display: flex; pointer-events: none; }
.wm-logo { width: 72px; height: 80px; flex: none; }
.wm-text { margin-left: 7px; display: flex; flex-direction: column; }
.wm-big { font: bold 40px/42px "Noto Sans", "Noto Sans CJK SC", sans-serif; color: rgba(255,200,225,.58); white-space: nowrap; margin-top: 12px; letter-spacing: 1px; }
.wm-url { font: bold 14px/14px "Liberation Sans", sans-serif; letter-spacing: 2.400px; color: rgba(150,150,180,.85); margin-top: 2px; white-space: nowrap; }

/* taskbar */
.taskbar { position: relative; flex: none; height: 8px; background: #05080c; border-top: 1px solid #b8b8b8; overflow: hidden; }
.task-white { position: absolute; left: 45px; top: 0; width: 344px; height: 8px; background: #f2f2f2; }
.clock { position: absolute; left: 1255px; top: 3px; font-size: 11px; line-height: 14px; color: #ddd; }
```
